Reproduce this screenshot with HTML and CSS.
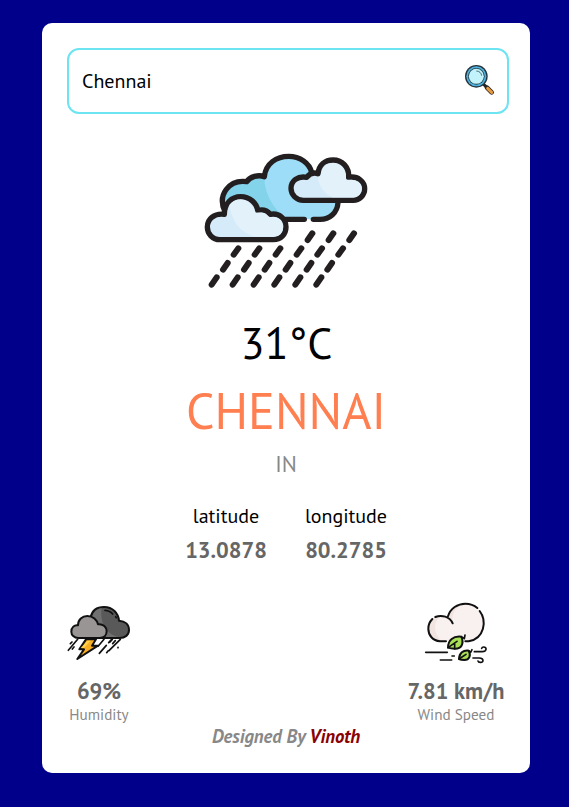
FILE: index.html
```html
<!DOCTYPE html>
<html lang="en">
<head>
<meta charset="utf-8">
<title>Weather</title>
<link rel="stylesheet" href="styles.css">
</head>
<body>
<main class="card">
  <div class="search">
    <span class="query">Chennai</span>
    <svg class="search-icon" viewBox="0 0 96 96">
      <path d="M58 60l11 11" stroke="#222" stroke-width="9"/>
      <path d="M69 71l14 14" stroke="#2b2523" stroke-width="14" stroke-linecap="round"/>
      <path d="M71 73l12 12" stroke="#e99a3c" stroke-width="9" stroke-linecap="round"/>
      <circle cx="37" cy="37" r="34" fill="#26333c"/>
      <circle cx="37" cy="37" r="30" fill="#4fb2dc"/>
      <circle cx="37" cy="37" r="25" fill="#26404c"/>
      <circle cx="37" cy="37" r="22.5" fill="#c3f3fa"/>
      <path d="M37 21c9 0 15 6 16 14" fill="none" stroke="#34515c" stroke-width="2.5"/>
    </svg>
  </div>

  <svg class="weather-icon" viewBox="0 0 540 450" fill="none" stroke="#231f20" stroke-width="16" stroke-linecap="round" stroke-linejoin="round">
    <path stroke="none" fill="#9eddf7" d="M92 200C70 150 100 105 155 110C165 95 190 88 208 95C212 55 245 34 281 34C320 34 345 60 352 85L430 170C428 205 405 223 375 223H180Z"/>
    <path stroke="none" fill="#83d3eb" d="M92 200C70 150 100 105 155 110C165 95 190 88 208 95C208 145 235 195 280 223H180Z"/>
    <path d="M90 200C66 150 102 103 155 110C165 95 190 88 208 95C212 55 245 34 281 34C315 34 343 54 350 82M270 223H328M355 223H375C405 223 427 203 429 173"/>
    <path fill="#d6ebf9" d="M75 284C52 284 37 266 37 246C37 222 58 204 88 208C88 175 110 155 137 155C165 155 185 175 188 196C205 192 218 198 226 208C253 203 273 222 273 246C273 268 257 284 235 284Z"/>
    <path stroke="none" fill="#e3f2fa" d="M103 180C120 155 168 155 181 204C202 200 212 204 222 217C247 212 264 225 264 246C264 264 252 275 235 275H180C130 260 110 222 103 180Z"/>
    <path fill="#d6ebf9" d="M325 166C305 166 288 150 288 130C288 108 308 92 335 97C343 87 355 81 369 86C372 60 390 45 414 45C442 45 463 67 461 97C489 92 509 110 509 131C509 151 493 166 475 166Z"/>
    <path stroke="none" fill="#e3f2fa" d="M369 95H377C379 68 394 54 414 54C437 54 456 75 453 106C481 100 500 114 500 131C500 147 489 157 475 157H412C385 143 371 120 369 95Z"/>
    <path stroke-width="18" d="M338 285l14-20M401 285l14-20M463 285l14-20M116 329l14-19M179 329l14-19M242 329l14-19M305 329l14-19M367 329l14-19M430 329l14-19M84 374l14-20M147 374l14-20M209 374l14-20M272 374l14-20M335 374l14-20M397 374l14-20M50 419l15-22M113 419l15-22M176 419l15-22M238 419l15-22M301 419l15-22M364 419l15-22"/>
  </svg>

  <div class="temp">31°C</div>
  <div class="city">CHENNAI</div>
  <div class="country">IN</div>

  <section class="coords">
    <div class="coord">
      <span class="coord-name">latitude</span>
      <span class="value">13.0878</span>
    </div>
    <div class="coord">
      <span class="coord-name">longitude</span>
      <span class="value">80.2785</span>
    </div>
  </section>

  <section class="details">
    <div class="detail humidity">
      <svg class="detail-icon" viewBox="0 0 240 210" fill="none" stroke="#111" stroke-width="6" stroke-linecap="round" stroke-linejoin="round">
        <path fill="#595959" d="M92 58C96 38 111 27 132 27C158 27 175 45 177 68C196 69 207 80 207 96C207 111 195 120 179 120H110Z"/>
        <path stroke="none" fill="#707070" d="M96 60C99 42 112 31 125 31C119 70 137 108 174 117H110Z"/>
        <path fill="#999595" d="M55 120C42 120 34 111 34 101C34 88 43 80 54 82C54 64 67 54 82 54C99 54 111 65 114 79C130 77 140 88 140 100C140 112 131 120 119 120Z"/>
        <path d="M135 37q15 1 23 11M167 56l2 3" stroke-width="5"/>
        <path fill="#f7ae25" d="M78 124H108L96 143H114L52 183L72 154H58Z"/>
        <path stroke="none" fill="#ffd34b" d="M83 128H92L72 150H62Z"/>
        <path d="M53 124l-28 33M36 132l-5 5M42 147l-5 6M132 124l-17 20M155 124l-9 10M139 142l-21 24M181 124l-34 34M157 124l-7 8M166 128l-8 9M144 159l-4 5M174 148v1" stroke-width="5"/>
      </svg>
      <span class="value">69%</span>
      <span class="label">Humidity</span>
    </div>
    <div class="detail wind">
      <svg class="detail-icon" viewBox="0 0 240 210" fill="none" stroke="#111" stroke-width="6" stroke-linecap="round" stroke-linejoin="round">
        <path stroke="none" fill="#f8f1ef" d="M72 130C51 128 40 112 40 92C40 70 57 53 79 53C87 53 94 54 99 57C105 32 128 17 151 17C184 17 208 43 208 74C208 105 186 130 153 130Z"/>
        <path stroke="none" fill="#f1e4e1" d="M72 130C51 128 40 112 40 92C40 70 57 53 79 53C48 73 60 112 82 130ZM99 57C105 32 128 17 151 17C124 26 112 40 111 69Z"/>
        <path d="M93 130H75C53 128 40 112 40 92C40 81 45 70 52 63M61 57C80 49 104 56 113 76M99 55C106 31 128 17 151 17C166 17 178 22 187 30M194 39C216 68 209 121 161 130H151"/>
        <path fill="#a9df55" d="M99 149C99 126 115 113 139 116C148 137 139 153 119 152C111 152 105 151 99 149Z"/>
        <path d="M99 149L126 130M119 152V137M139 116L148 122L150 111" stroke-width="5"/>
        <path fill="#a9df55" d="M132 183C133 165 144 156 161 158C169 172 163 186 148 186C141 186 136 185 132 183Z"/>
        <path d="M132 183L153 169M161 158L167 163L171 155M32 163H97M76 186H110M111 174H118M178 161H202C215 161 217 147 206 147Q201 147 200 151M174 180H193C207 180 207 194 196 193Q190 193 189 189" stroke-width="5"/>
      </svg>
      <span class="value">7.81 km/h</span>
      <span class="label">Wind Speed</span>
    </div>
  </section>

  <footer class="credit">Designed By <span class="author">Vinoth</span></footer>
</main>
</body>
</html>
```
FILE: styles.css
```css
* { box-sizing: border-box; }
body {
  margin: 0;
  padding-top: 23px;
  height: 807px;
  background: #00008b;
  font-family: "PT Sans", "Noto Sans", sans-serif;
  color: #000;
}
.card {
  width: 488px;
  height: 750px;
  margin-left: 42px;
  padding: 25px 21px 0 25px;
  background: #fff;
  border-radius: 10px;
  display: flex;
  flex-direction: column;
  white-space: nowrap;
}
.search {
  height: 66px;
  border: 2px solid #6ce4f2;
  border-radius: 12px;
  padding: 0 11px 0 13px;
  display: flex;
  align-items: center;
  justify-content: space-between;
}
.query { font-size: 20px; }
.search-icon { width: 32px; height: 32px; margin-top: -2px; }
.weather-icon { width: 180px; height: 150px; margin: 31px 0 0 128px; }
.temp, .city, .country, .credit { text-align: center; width: 438px; }
.temp { font-size: 44px; line-height: 44px; margin-top: 26px; padding-left: 1px; }
.city { font-size: 50px; line-height: 60px; margin-top: 16px; color: #ff7f50; }
.country { font-size: 22.4px; line-height: 26px; margin-top: 10px; color: #888; }
.coords { display: flex; justify-content: center; gap: 38px; width: 438px; margin-top: 26px; }
.coord, .detail { display: flex; flex-direction: column; align-items: center; }
.coord { width: 82px; }
.coord-name { font-size: 20px; line-height: 26px; }
.value { font-size: 22.4px; line-height: 24px; font-weight: 700; color: #666; }
.coord .value { margin-top: 9px; }
.details { display: flex; justify-content: space-between; margin: 36px 4px 0 -7px; }
.detail { width: 80px; }
.humidity .value, .humidity .label { margin-right: 2px; }
.wind { width: 98px; }
.detail-icon { width: 80px; height: 70px; }
.wind .detail-icon { margin-right: 2px; }
.detail .value { margin-top: 11px; }
.label { font-size: 15.2px; line-height: 18px; margin-top: 3px; color: #888; }
.credit { font-size: 18.72px; line-height: 24px; font-weight: 700; font-style: italic; color: #888; }
.author { color: #8b0000; }
```
